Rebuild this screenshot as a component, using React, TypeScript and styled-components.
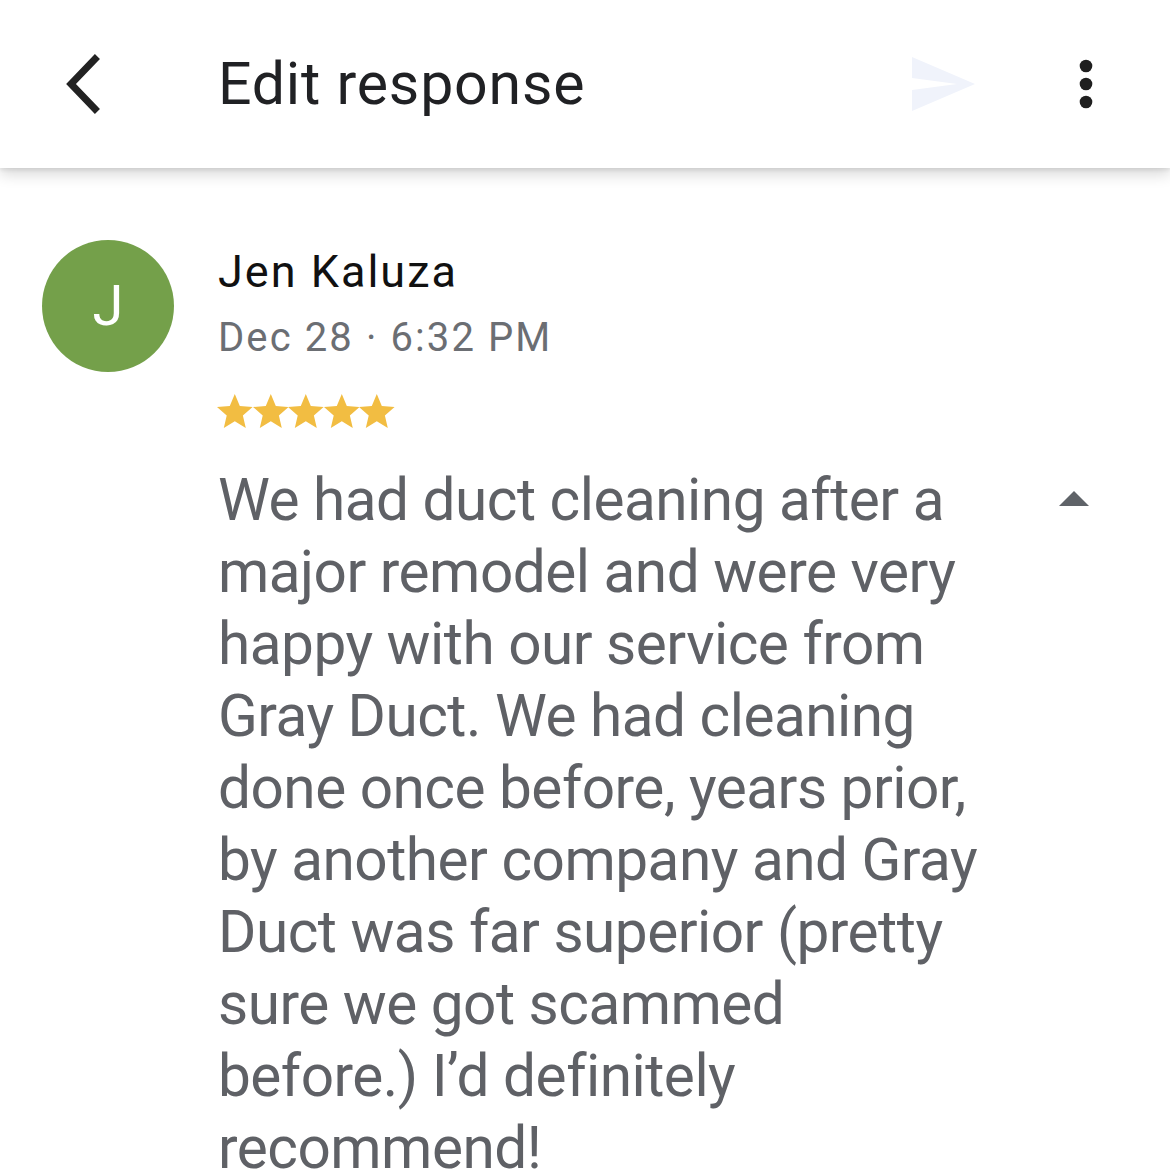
import React from "react";
import styled, { createGlobalStyle } from "styled-components";

const Global = createGlobalStyle`
  html, body { margin: 0; padding: 0; background: #ffffff; }
  body { font-family: Roboto, "Noto Sans", Arial, sans-serif; -webkit-font-smoothing: antialiased; }
`;

const Page = styled.div`
  width: 1170px;
  height: 1170px;
  overflow: hidden;
  background: #ffffff;
  display: flex;
  flex-direction: column;
`;

const Toolbar = styled.header`
  position: relative;
  z-index: 2;
  height: 168px;
  flex: none;
  background: #ffffff;
  box-shadow: 0 6px 14px rgba(0, 0, 0, 0.16), 0 2px 4px rgba(0, 0, 0, 0.08);
  display: flex;
  align-items: center;
`;

const IconButton = styled.button<{ $w: number; $ml?: number }>`
  flex: none;
  width: ${(p) => p.$w}px;
  height: 72px;
  margin-left: ${(p) => p.$ml ?? 0}px;
  padding: 0;
  border: 0;
  background: none;
  display: flex;
  align-items: center;
  justify-content: center;
`;

const Title = styled.h1`
  margin: 0 0 0 98px;
  flex: 1;
  font-family: Roboto, Arial, sans-serif;
  font-weight: 400;
  font-size: 59px;
  line-height: 72px;
  color: #202124;
  letter-spacing: 0.8px;
`;

const Spacer = styled.div`
  width: 48px;
  flex: none;
`;

const Content = styled.main`
  display: flex;
  align-items: flex-start;
  padding: 72px 0 0 42px;
`;

const Avatar = styled.div`
  flex: none;
  width: 132px;
  height: 132px;
  border-radius: 50%;
  background: #74a04a;
  color: #ffffff;
  display: flex;
  align-items: center;
  justify-content: center;
  font-size: 56px;
  font-weight: 400;
  line-height: 1;
`;

const Details = styled.div`
  flex: 1;
  margin-left: 44px;
  padding-top: 6px;
  display: flex;
  flex-direction: column;
`;

const Name = styled.div`
  font-size: 45px;
  line-height: 52px;
  color: #111111;
  font-weight: 400;
  letter-spacing: 2px;
`;

const Meta = styled.div`
  margin-top: 16px;
  font-size: 40px;
  line-height: 48px;
  color: #6b6e73;
  letter-spacing: 2.1px;
`;

const Stars = styled.div`
  margin-top: 32px;
  display: flex;
  height: 34px;
  margin-left: -1px;
`;

const BodyRow = styled.div`
  margin-top: 36px;
  display: flex;
  align-items: flex-start;
  justify-content: space-between;
  padding-right: 80px;
`;

const ReviewText = styled.p`
  margin: 0;
  font-size: 58.5px;
  line-height: 72px;
  color: #5f6166;
  font-weight: 400;
  letter-spacing: -0.5px;
`;

const Collapse = styled.button`
  flex: none;
  margin-top: 26px;
  padding: 0;
  border: 0;
  background: none;
  width: 32px;
  height: 18px;
  display: flex;
`;

const Star = () => (
  <svg width="35.6" height="34" viewBox="2 2 20 19">
    <path
      fill="#f2bd42"
      d="M12 17.27L18.18 21l-1.64-7.03L22 9.24l-7.19-.61L12 2 9.19 8.63 2 9.24l5.46 4.73L5.82 21z"
    />
  </svg>
);

const lines = [
  "We had duct cleaning after a",
  "major remodel and were very",
  "happy with our service from",
  "Gray Duct. We had cleaning",
  "done once before, years prior,",
  "by another company and Gray",
  "Duct was far superior (pretty",
  "sure we got scammed",
  "before.) I\u2019d definitely",
  "recommend!",
];

export default function App() {
  return (
    <Page>
      <Global />
      <Toolbar>
        <IconButton $w={72} $ml={48} aria-label="Back">
          <svg width="44" height="64" viewBox="0 0 44 64">
            <polyline
              points="33,7 9,32 33,57"
              fill="none"
              stroke="#222222"
              strokeWidth="7"
              strokeLinecap="square"
              strokeLinejoin="miter"
            />
          </svg>
        </IconButton>
        <Title>Edit response</Title>
        <IconButton $w={72} aria-label="Send">
          <svg width="72" height="72" viewBox="0 0 24 24">
            <path fill="#f0f3fb" d="M2.01 21L23 12 2.01 3 2 10l15 2-15 2z" />
          </svg>
        </IconButton>
        <IconButton $w={72} $ml={72} aria-label="More">
          <svg width="72" height="72" viewBox="0 0 24 24">
            <circle cx="12" cy="6" r="2.1" fill="#1f1f1f" />
            <circle cx="12" cy="12" r="2.1" fill="#1f1f1f" />
            <circle cx="12" cy="18" r="2.1" fill="#1f1f1f" />
          </svg>
        </IconButton>
        <Spacer />
      </Toolbar>
      <Content>
        <Avatar>J</Avatar>
        <Details>
          <Name>Jen Kaluza</Name>
          <Meta>Dec 28 · 6:32 PM</Meta>
          <Stars>
            <Star />
            <Star />
            <Star />
            <Star />
            <Star />
          </Stars>
          <BodyRow>
            <ReviewText>
              {lines.map((l, i) => (
                <React.Fragment key={i}>
                  {l}
                  {i < lines.length - 1 && <br />}
                </React.Fragment>
              ))}
            </ReviewText>
            <Collapse aria-label="Collapse">
              <svg width="32" height="16" viewBox="0 0 32 16">
                <polygon points="16,1 31,16 1,16" fill="#5f6368" />
              </svg>
            </Collapse>
          </BodyRow>
        </Details>
      </Content>
    </Page>
  );
}
